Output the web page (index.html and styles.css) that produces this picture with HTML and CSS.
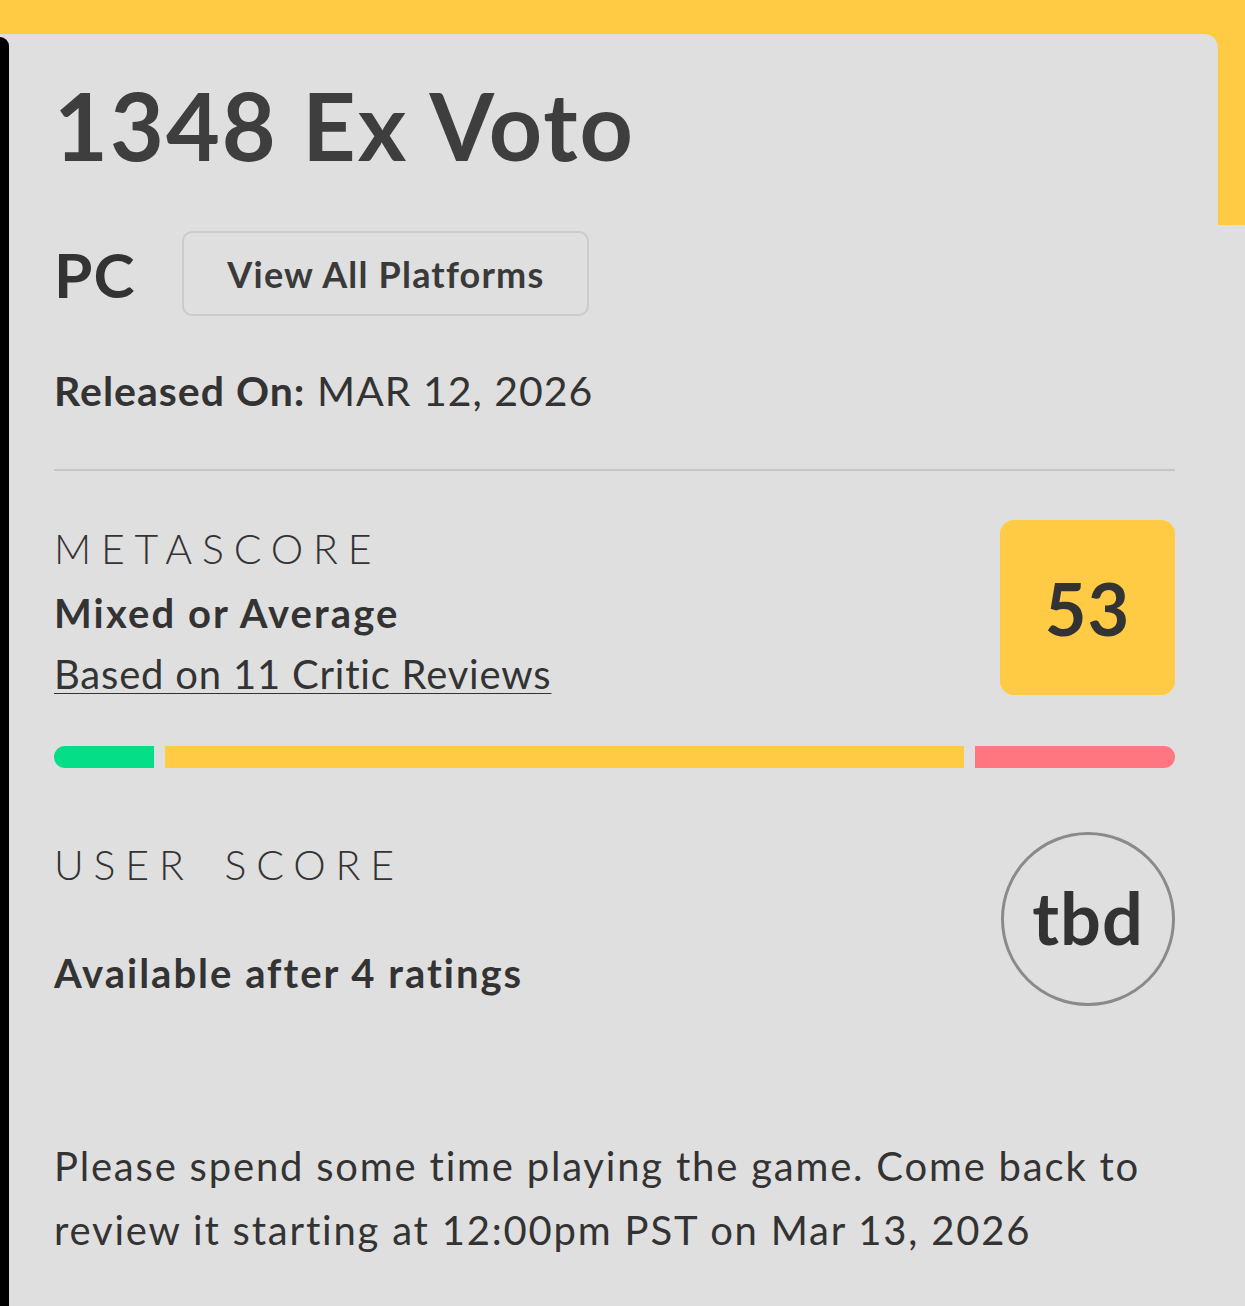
FILE: index.html
```html
<!DOCTYPE html>
<html lang="en">
<head>
<meta charset="utf-8">
<title>1348 Ex Voto</title>
<link rel="stylesheet" href="styles.css">
</head>
<body>
<div class="shell">
  <div class="edge"></div>
  <main class="card">
    <h1 class="title">1348 Ex Voto</h1>
    <div class="platform-row">
      <span class="platform">PC</span>
      <a class="platforms-btn" href="#">View All Platforms</a>
    </div>
    <p class="released"><strong>Released On:</strong> MAR 12, 2026</p>
    <hr class="divider">
    <section class="score-row">
      <div class="score-text">
        <div class="label">METASCORE</div>
        <div class="verdict">Mixed or Average</div>
        <a class="reviews" href="#">Based on 11 Critic Reviews</a>
      </div>
      <div class="metascore">53</div>
    </section>
    <div class="bars">
      <span class="bar bar-green"></span>
      <span class="bar bar-yellow"></span>
      <span class="bar bar-red"></span>
    </div>
    <section class="score-row user-row">
      <div class="score-text">
        <div class="label user-label">USER SCORE</div>
        <div class="verdict avail">Available after 4 ratings</div>
      </div>
      <div class="userscore">tbd</div>
    </section>
    <p class="note">Please spend some time playing the game. Come back to review it starting at 12:00pm PST on Mar 13, 2026</p>
  </main>
</div>
</body>
</html>
```

FILE: styles.css
```css
html, body {
  margin: 0;
  padding: 0;
}
body {
  font-family: "Lato", "Liberation Sans", sans-serif;
  color: #333;
  background: linear-gradient(#ffcb45, #ffcb45) top left / 100% 225px no-repeat, #dfdfdf;
  min-height: 100vh;
}
.shell {
  margin: 34px 27px 0 0;
  background: #dfdfdf;
  border-top-right-radius: 14px;
  display: flex;
  min-height: calc(100vh - 34px);
}
.edge {
  flex: 0 0 9px;
  margin-top: 3px;
  background: #000;
  border-top-right-radius: 9px;
}
.card {
  flex: 1;
  padding: 45px 43px 40px 45px;
}
.title {
  margin: 0;
  font-size: 93px;
  line-height: 1;
  font-weight: 700;
  color: #3e3e3e;
  letter-spacing: 2px;
}
.platform-row {
  display: flex;
  align-items: center;
  margin-top: 59px;
}
.platform {
  font-size: 62px;
  font-weight: 700;
  line-height: 1;
  color: #333;
  letter-spacing: 1px;
}
.platforms-btn {
  margin-left: 47px;
  width: 407px;
  height: 85px;
  box-sizing: border-box;
  border: 2px solid #cbcbcb;
  border-radius: 10px;
  display: flex;
  align-items: center;
  justify-content: center;
  font-size: 36px;
  font-weight: 700;
  letter-spacing: 1.2px;
  color: #3a3a3a;
  text-decoration: none;
}
.released {
  margin: 54px 0 0;
  font-size: 41px;
  line-height: 1;
  letter-spacing: 1px;
  color: #333;
}
.released strong {
  font-weight: 700;
}
.divider {
  margin: 58px 0 0;
  border: 0;
  height: 2px;
  background: #c6c6c6;
}
.score-row {
  display: flex;
  justify-content: space-between;
  align-items: flex-start;
  margin-top: 47px;
}
.score-text {
  display: flex;
  flex-direction: column;
  align-items: flex-start;
}
.label {
  font-size: 41px;
  line-height: 62px;
  font-weight: 300;
  letter-spacing: 9.8px;
  color: #333;
}
.user-label {
  word-spacing: 10px;
}
.verdict {
  font-size: 40px;
  line-height: 62px;
  font-weight: 700;
  letter-spacing: 2.1px;
  color: #333;
  margin-top: 2px;
}
.reviews {
  font-size: 40px;
  line-height: 60px;
  letter-spacing: 0.8px;
  color: #333;
  text-decoration: underline;
  text-decoration-thickness: 1px;
  text-underline-offset: 4px;
}
.metascore {
  margin-top: 2px;
  width: 175px;
  height: 175px;
  border-radius: 14px;
  background: #ffcb45;
  display: flex;
  align-items: center;
  justify-content: center;
  font-size: 72px;
  font-weight: 700;
  letter-spacing: 1px;
  color: #333;
}
.bars {
  display: flex;
  gap: 11px;
  margin-top: 42px;
  height: 22px;
}
.bar {
  display: block;
  height: 22px;
}
.bar-green {
  flex: 0 0 100px;
  background: #04de86;
  border-radius: 11px 0 0 11px;
}
.bar-yellow {
  flex: 1;
  background: #ffcb45;
}
.bar-red {
  flex: 0 0 200px;
  background: #ff7580;
  border-radius: 0 11px 11px 0;
}
.user-row {
  margin-top: 66px;
}
.user-row .userscore {
  margin-top: -2px;
}
.avail {
  margin-top: 46px;
  letter-spacing: 2px;
}
.userscore {
  width: 174px;
  height: 174px;
  box-sizing: border-box;
  border: 3px solid #8a8a8a;
  border-radius: 50%;
  display: flex;
  align-items: center;
  justify-content: center;
  font-size: 72px;
  font-weight: 700;
  letter-spacing: 1px;
  color: #333;
  padding-bottom: 4px;
}
.note {
  margin: 128px 0 0;
  font-size: 40px;
  line-height: 64px;
  letter-spacing: 1.8px;
  color: #333;
}
```
